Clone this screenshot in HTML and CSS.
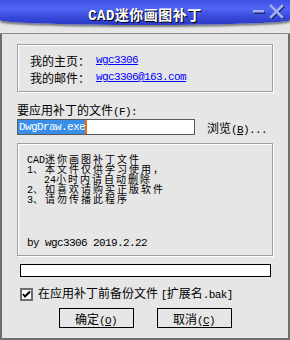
FILE: index.html
```html
<!DOCTYPE html>
<html>
<head>
<meta charset="utf-8">
<link rel="stylesheet" href="styles.css">
</head>
<body>
<div class="window">
  <div class="head">
    <div class="titlebar">
      <span></span>
      <span class="title"><span class="ta">CAD</span>迷你画图补丁</span>
      <svg class="ctrls" width="34" height="15" viewBox="0 0 34 15">
        <rect x="2" y="8" width="11" height="2" fill="#1c2478"/>
        <rect x="1" y="6" width="11" height="2.5" fill="#a4b0f2"/>
        <g stroke="#1c2478" stroke-width="2.6" stroke-linecap="square">
          <line x1="20" y1="3" x2="31" y2="14"/>
          <line x1="31" y1="3" x2="20" y2="14"/>
        </g>
        <g stroke="#a4b0f2" stroke-width="2.6" stroke-linecap="square">
          <line x1="19" y1="2" x2="30" y2="13"/>
          <line x1="30" y1="2" x2="19" y2="13"/>
        </g>
      </svg>
    </div>
  </div>
  <div class="content">
    <div class="group info">
      <div class="row"><span class="lbl">我的主页：</span><a class="link a" href="#">wgc3306</a></div>
      <div class="row"><span class="lbl">我的邮件：</span><a class="link a" href="#">wgc3306@163.com</a></div>
    </div>
    <div class="file-label">要应用补丁的文件<span class="a">(F):</span></div>
    <div class="file-row">
      <div class="input"><span class="sel a">DwgDraw.exe</span><span class="caret"></span></div>
      <span class="browse">浏览<span class="a">(<u>B</u>)...</span></span>
    </div>
    <div class="group notes">
      <div class="line"><span class="a">CAD</span>迷你画图补丁文件</div>
      <div class="line"><span class="a">1</span>、本文件仅供学习使用，</div>
      <div class="line indent"><span class="a">24</span>小时内请自动删除</div>
      <div class="line"><span class="a">2</span>、如喜欢请购买正版软件</div>
      <div class="line"><span class="a">3</span>、请勿传播此程序</div>
      <div class="line by a">by wgc3306 2019.2.22</div>
    </div>
    <div class="progress"></div>
    <div class="check">
      <svg width="13" height="13" viewBox="0 0 13 13">
        <rect x="0" y="0" width="13" height="13" fill="#6e6e6e"/>
        <rect x="2" y="2" width="9" height="9" fill="#fff"/>
        <path d="M3 6 L5 8.5 L10 3.5" fill="none" stroke="#000" stroke-width="2"/>
      </svg>
      <span>在应用补丁前备份文件 <span class="a">[</span>扩展名<span class="a">.bak]</span></span>
    </div>
    <div class="buttons">
      <button class="btn">确定<span class="a">(<u>O</u>)</span></button>
      <button class="btn">取消<span class="a">(<u>C</u>)</span></button>
    </div>
  </div>
</div>
</body>
</html>
```

FILE: styles.css
```css
html, body {
  margin: 0;
  padding: 0;
  background: #e6e6e6;
}
body {
  font-family: "Noto Sans CJK SC", sans-serif;
  font-size: 12px;
  color: #000;
}
.a {
  font-family: "Liberation Mono", monospace;
  font-size: 11px;
  letter-spacing: -0.6px;
}
.window {
  width: 290px;
  height: 340px;
  box-sizing: border-box;
  background: #e6e6e6;
  border: 2px solid #6e6e6e;
  border-top: 0;
  display: flex;
  flex-direction: column;
}
.head {
  margin: 0 -2px;
  height: 33px;
  background: linear-gradient(#bdbdbd, #dedede 45%, #e8e8e8);
  border-bottom: 1px solid #8c8c8c;
}
.titlebar {
  height: 25px;
  background: linear-gradient(#3f51e3 0%, #5064f2 35%, #3748da 70%, #2a38c2 100%);
  border-radius: 0 0 50% 50% / 0 0 5px 5px;
  box-shadow: 0 2px 2px rgba(0, 0, 0, 0.45);
  display: grid;
  grid-template-columns: 1fr auto 1fr;
}
.title {
  padding-top: 5px;
  color: #fff;
  font-weight: bold;
  font-size: 14px;
  line-height: 18px;
  letter-spacing: 0.5px;
  text-shadow: 1px 1px 0 #000;
}
.ta {
  font-family: "Liberation Mono", monospace;
  font-weight: bold;
  font-size: 14px;
}
.ctrls {
  justify-self: end;
  margin: 4px 4px 0 0;
}
.content {
  padding: 10px 15px 0;
  display: flex;
  flex-direction: column;
}
.group {
  box-sizing: border-box;
  border: 1px solid #a0a0a0;
  box-shadow: inset 1px 1px #fff, 1px 1px #fff;
}
.info {
  height: 48px;
  padding: 7px 0 0 12px;
}
.row {
  display: flex;
  line-height: 17px;
}
.lbl {
  width: 66px;
}
.link {
  color: #0000ff;
  text-decoration: underline;
}
.file-label {
  margin-top: 11px;
  line-height: 14px;
}
.file-row {
  display: flex;
  align-items: center;
  height: 16px;
}
.input {
  width: 178px;
  height: 16px;
  box-sizing: border-box;
  border: 1px solid #5a5a5a;
  background: #fff;
  display: flex;
  align-items: stretch;
  padding: 0;
}
.sel {
  background: #3a8ee8;
  color: #fff;
  line-height: 14px;
  padding-left: 1px;
}
.caret {
  width: 2px;
  background: #f07000;
}
.browse {
  margin-left: 12px;
}
.notes {
  margin-top: 8px;
  height: 113px;
  padding: 10px 0 0 9px;
}
.line {
  font-size: 10px;
  letter-spacing: 2px;
  line-height: 10px;
  height: 10px;
  white-space: nowrap;
}
.line .a {
  font-size: 10px;
  letter-spacing: 0;
}
.line.by {
  font-size: 11px;
  letter-spacing: -0.6px;
}
.indent {
  padding-left: 17px;
}
.by {
  margin-top: 34px;
}
.progress {
  margin: 8px 2px 0 3px;
  height: 13px;
  box-sizing: border-box;
  border: 1px solid #000;
  background: #fff;
}
.check {
  margin-top: 9px;
  padding-left: 3px;
  display: flex;
  align-items: center;
  gap: 5px;
  line-height: 14px;
}
.buttons {
  margin-top: 6px;
  display: flex;
  justify-content: center;
  gap: 23px;
}
.btn {
  width: 75px;
  height: 20px;
  box-sizing: border-box;
  border: 1px solid #000;
  background: #e6e6e6;
  font-family: "Noto Sans CJK SC", sans-serif;
  font-size: 12px;
  padding: 0;
  color: #000;
}
```
